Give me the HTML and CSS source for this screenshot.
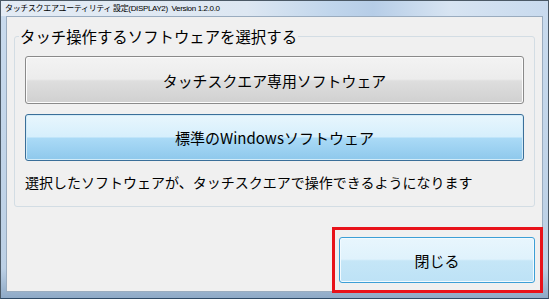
FILE: index.html
```html
<!DOCTYPE html>
<html lang="ja">
<head>
  <meta charset="UTF-8" />
  <title>タッチスクエアユーティリティ 設定</title>
  <link rel="stylesheet" href="styles.css">
</head>
<body>
  <div class="window">
    <div class="titlebar">タッチスクエアユーティリティ 設定(DISPLAY2)&nbsp; Version 1.2.0.0</div>

    <div class="client">
      <!-- software choice -->
      <fieldset class="group">
        <legend>タッチ操作するソフトウェアを選択する</legend>
        <button class="choice">タッチスクエア専用ソフトウェア</button>
        <button class="choice choice-active">標準のWindowsソフトウェア</button>
        <p class="note">選択したソフトウェアが、タッチスクエアで操作できるようになります</p>
      </fieldset>

      <div class="footer">
        <button class="close">閉じる</button>
      </div>
    </div>
  </div>
</body>
</html>
```

FILE: styles.css
```css
/* Windows 7 style dialog */
* {
  margin: 0;
  padding: 0;
  box-sizing: border-box;
}
body {
  background: #ffffff;
  font-family: "Noto Sans CJK JP", "Noto Sans", sans-serif;
  color: #000;
}
.window {
  width: 549px;
  height: 299px;
  border: 1px solid #4b5966;
  border-bottom-color: #2f4a66;
  background: linear-gradient(to bottom, #c9dbee, #bcd0e5 90%, #8ea9c6);
  padding: 0 5px 6px 5px;
  display: flex;
  flex-direction: column;
}
.titlebar {
  height: 15px;
  margin: 0 -5px;
  padding-left: 4px;
  font-family: "Liberation Sans", "Noto Sans CJK JP", sans-serif;
  font-size: 8px;
  letter-spacing: -0.35px;
  line-height: 16px;
  white-space: nowrap;
  background: linear-gradient(to right, #e3ebf4 0%, #dde7f2 45%, #c1d6ec 60%, #b6cde7 68%, #d7e4f2 82%, #c8daee 100%);
}
.client {
  flex: 1;
  background: #f0f0f0;
  border: 1px solid #9aacbf;
  padding: 0 7px;
  display: flex;
  flex-direction: column;
}
.group {
  margin-top: 9px;
  border: 1px solid #d3dde4;
  border-radius: 3px;
  padding: 0 10px 14px 10px;
  display: flex;
  flex-direction: column;
}
.group legend {
  font-size: 15.4px;
  line-height: 20px;
  margin-left: -6px;
  padding: 0 1px;
}
.choice {
  font-family: "Noto Sans CJK JP", "Noto Sans", sans-serif;
  font-size: 14.9px;
  color: #000;
  height: 48px;
  margin-top: 10px;
  border: 1px solid #8a8a8a;
  border-radius: 3px;
  background: linear-gradient(to bottom, #f3f3f3 0%, #ececec 48%, #dedede 52%, #d0d0d0 100%);
  box-shadow: inset 0 0 0 1px #fcfcfc;
}
.choice-active {
  height: 47px;
  font-size: 15px;
  border-color: #3a6f99;
  background: linear-gradient(to bottom, #e8f6fd 0%, #d6effc 48%, #aadaf6 52%, #8ec8ec 100%);
  box-shadow: inset 0 0 0 1px #d2ebf8;
}
.note {
  margin-top: 11px;
  font-size: 14px;
  line-height: 20px;
}
.footer {
  margin-top: auto;
  padding-bottom: 8px;
  display: flex;
  justify-content: flex-end;
}
.close {
  position: relative;
  width: 196px;
  height: 46px;
  font-family: "Noto Sans CJK JP", "Noto Sans", sans-serif;
  font-size: 15px;
  color: #000;
  border: 1px solid #3c9fd6;
  border-radius: 3px;
  background: linear-gradient(to bottom, #e8f6fd 0%, #dff2fc 48%, #c5e6f7 52%, #bde2f6 100%);
  box-shadow: inset 0 0 0 1px #f2faff;
}
/* red highlight drawn over the screenshot */
.close::after {
  content: "";
  position: absolute;
  top: -11px;
  left: -8px;
  right: -9px;
  bottom: -11px;
  border: 3px solid #e8121a;
}
```
